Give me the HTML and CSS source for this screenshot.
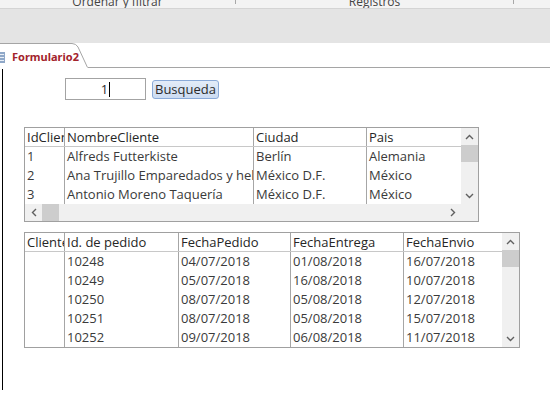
FILE: index.html
```html
<!DOCTYPE html>
<html lang="es">
<head>
    <meta charset="UTF-8">
    <title>Formulario2</title>
    <link rel="stylesheet" href="styles.css">
</head>
<body>
    <!-- Cinta superior (cortada) -->
    <div class="cinta">
        <div class="grupo grupo-ordenar"><span>Ordenar y filtrar</span></div>
        <div class="grupo grupo-registros"><span>Registros</span></div>
    </div>
    <div class="banda"></div>

    <!-- Pestañas de documento -->
    <div class="pestanas">
        <div class="pestana">
            <svg class="pestana-borde" width="90" height="25" viewBox="0 0 90 25">
                <path d="M0 0.5 H72 Q76 0.5 78 4 L87.5 24.5" fill="none" stroke="#a5a5a5" stroke-width="1"/>
            </svg>
            <span class="icono-form">
                <svg width="5" height="11" viewBox="0 0 5 11">
                    <rect x="0" y="0" width="5" height="11" fill="#8fa8c8"/>
                    <rect x="0" y="2" width="4" height="1" fill="#e8eef6"/>
                    <rect x="0" y="5" width="4" height="1" fill="#e8eef6"/>
                    <rect x="0" y="8" width="4" height="1" fill="#e8eef6"/>
                </svg>
            </span>
            <span class="pestana-texto">Formulario2</span>
        </div>
        <div class="pestanas-resto"></div>
    </div>

    <div class="area">
        <div class="regla"></div>
        <div class="formulario">
            <div class="busqueda">
                <div class="campo"><span>1</span><span class="cursor"></span></div>
                <button class="boton">Busqueda</button>
            </div>

            <!-- Subformulario de clientes -->
            <div class="hoja hoja-clientes">
                <div class="hoja-cuerpo">
                    <div class="filas">
                        <div class="fila cabecera">
                            <div class="celda">IdCliente</div>
                            <div class="celda">NombreCliente</div>
                            <div class="celda">Ciudad</div>
                            <div class="celda">Pais</div>
                        </div>
                        <div class="fila">
                            <div class="celda">1</div>
                            <div class="celda">Alfreds Futterkiste</div>
                            <div class="celda">Berlín</div>
                            <div class="celda">Alemania</div>
                        </div>
                        <div class="fila">
                            <div class="celda">2</div>
                            <div class="celda">Ana Trujillo Emparedados y helados</div>
                            <div class="celda">México D.F.</div>
                            <div class="celda">México</div>
                        </div>
                        <div class="fila">
                            <div class="celda">3</div>
                            <div class="celda">Antonio Moreno Taquería</div>
                            <div class="celda">México D.F.</div>
                            <div class="celda">México</div>
                        </div>
                    </div>
                    <div class="barra-v">
                        <span class="flecha"><svg width="9" height="6" viewBox="0 0 9 6"><path d="M1 5 L4.5 1.5 L8 5" fill="none" stroke="#606060" stroke-width="1.4"/></svg></span>
                        <span class="pulgar-v"></span>
                        <span class="flecha flecha-abajo"><svg width="9" height="6" viewBox="0 0 9 6"><path d="M1 1 L4.5 4.5 L8 1" fill="none" stroke="#606060" stroke-width="1.4"/></svg></span>
                    </div>
                </div>
                <div class="barra-h">
                    <span class="flecha-h"><svg width="6" height="9" viewBox="0 0 6 9"><path d="M5 1 L1.5 4.5 L5 8" fill="none" stroke="#606060" stroke-width="1.4"/></svg></span>
                    <span class="pulgar-h"></span>
                    <span class="flecha-h flecha-der"><svg width="6" height="9" viewBox="0 0 6 9"><path d="M1 1 L4.5 4.5 L1 8" fill="none" stroke="#606060" stroke-width="1.4"/></svg></span>
                    <span class="esquina"></span>
                </div>
            </div>

            <!-- Subformulario de pedidos -->
            <div class="hoja hoja-pedidos">
                <div class="hoja-cuerpo">
                    <div class="filas">
                        <div class="fila cabecera">
                            <div class="celda">Cliente</div>
                            <div class="celda">Id. de pedido</div>
                            <div class="celda">FechaPedido</div>
                            <div class="celda">FechaEntrega</div>
                            <div class="celda">FechaEnvio</div>
                        </div>
                        <div class="fila">
                            <div class="celda"></div>
                            <div class="celda">10248</div>
                            <div class="celda">04/07/2018</div>
                            <div class="celda">01/08/2018</div>
                            <div class="celda">16/07/2018</div>
                        </div>
                        <div class="fila">
                            <div class="celda"></div>
                            <div class="celda">10249</div>
                            <div class="celda">05/07/2018</div>
                            <div class="celda">16/08/2018</div>
                            <div class="celda">10/07/2018</div>
                        </div>
                        <div class="fila">
                            <div class="celda"></div>
                            <div class="celda">10250</div>
                            <div class="celda">08/07/2018</div>
                            <div class="celda">05/08/2018</div>
                            <div class="celda">12/07/2018</div>
                        </div>
                        <div class="fila">
                            <div class="celda"></div>
                            <div class="celda">10251</div>
                            <div class="celda">08/07/2018</div>
                            <div class="celda">05/08/2018</div>
                            <div class="celda">15/07/2018</div>
                        </div>
                        <div class="fila">
                            <div class="celda"></div>
                            <div class="celda">10252</div>
                            <div class="celda">09/07/2018</div>
                            <div class="celda">06/08/2018</div>
                            <div class="celda">11/07/2018</div>
                        </div>
                    </div>
                    <div class="barra-v">
                        <span class="flecha"><svg width="9" height="6" viewBox="0 0 9 6"><path d="M1 5 L4.5 1.5 L8 5" fill="none" stroke="#606060" stroke-width="1.4"/></svg></span>
                        <span class="pulgar-v"></span>
                        <span class="flecha flecha-abajo"><svg width="9" height="6" viewBox="0 0 9 6"><path d="M1 1 L4.5 4.5 L8 1" fill="none" stroke="#606060" stroke-width="1.4"/></svg></span>
                    </div>
                </div>
            </div>
        </div>
    </div>
</body>
</html>
```

FILE: styles.css
```css
body {
    margin: 0;
    width: 550px;
    height: 393px;
    overflow: hidden;
    background: #ffffff;
    font-family: "Open Sans", "Noto Sans", sans-serif;
    font-size: 13px;
    color: #3a3a3a;
}

/* Cinta */
.cinta {
    display: flex;
    height: 8px;
    background: #f3f3f3;
    border-bottom: 1px solid #d4d4d4;
    overflow: hidden;
}
.grupo {
    display: flex;
    justify-content: center;
    align-items: flex-end;
    border-right: 1px solid #a8a8a8;
    height: 4px;
    overflow: visible;
}
.grupo span {
    line-height: 12px;
    margin-bottom: -4px;
    font-size: 12px;
    color: #444;
}
.grupo-ordenar {
    width: 235px;
}
.grupo-registros {
    width: 277px;
}
.banda {
    height: 34px;
    background: #e4e4e4;
}

/* Pestañas */
.pestanas {
    display: flex;
    height: 25px;
}
.pestana {
    position: relative;
    width: 88px;
    display: flex;
    align-items: center;
    gap: 7px;
    padding-top: 2px;
    box-sizing: border-box;
}
.pestana-borde {
    position: absolute;
    left: 0;
    top: 0;
}
.icono-form {
    display: flex;
    margin-top: 1px;
}
.pestana-texto {
    font-family: "Noto Sans", sans-serif;
    font-weight: bold;
    font-size: 11px;
    color: #a3232c;
}
.pestanas-resto {
    flex: 1;
    border-bottom: 1px solid #a5a5a5;
}

/* Área del formulario */
.area {
    display: flex;
    height: 325px;
}
.regla {
    width: 1px;
    margin-left: 2px;
    margin-top: 1px;
    height: 321px;
    background: #000000;
}
.formulario {
    display: flex;
    flex-direction: column;
    padding-left: 21px;
}
.busqueda {
    display: flex;
    align-items: center;
    gap: 6px;
    margin-top: 10px;
    margin-left: 41px;
}
.campo {
    width: 79px;
    height: 20px;
    border: 1px solid #a3a3a3;
    display: flex;
    justify-content: center;
    align-items: center;
    color: #2a2a2a;
    font-size: 13px;
}
.cursor {
    width: 1px;
    height: 15px;
    background: #000;
    margin-left: 1px;
}
.boton {
    height: 19px;
    padding: 0 2px;
    border: 1px solid #8aaad8;
    border-radius: 3px;
    background: linear-gradient(#e3ecf8, #ccdcf2);
    font-family: "Open Sans", sans-serif;
    font-size: 13px;
    line-height: 16px;
    color: #2b2b2b;
}

/* Hojas de datos */
.hoja {
    border: 1px solid #a0a0a0;
    display: flex;
    flex-direction: column;
    background: #fff;
}
.hoja-clientes {
    width: 453px;
    margin-top: 27px;
}
.hoja-pedidos {
    width: 494px;
    margin-top: 10px;
}
.hoja-cuerpo {
    display: flex;
}
.filas {
    flex: 1;
    display: flex;
    flex-direction: column;
    overflow: hidden;
}
.fila {
    display: grid;
    height: 19px;
}
.hoja-clientes .fila {
    grid-template-columns: 39px 189px 113px 95px;
}
.hoja-pedidos .fila {
    grid-template-columns: 39px 114px 112px 113px 99px;
}
.celda {
    border-left: 1px solid #a6a6a6;
    padding-left: 2px;
    line-height: 19px;
    white-space: nowrap;
    overflow: hidden;
}
.celda:first-child {
    border-left: none;
    padding-left: 2px;
}
.cabecera {
    height: 18px;
    border-bottom: 1px solid #c8c8c8;
    color: #262626;
}
.cabecera .celda {
    line-height: 18px;
}

/* Barras de desplazamiento */
.barra-v {
    width: 17px;
    background: #f0f0f0;
    display: flex;
    flex-direction: column;
    align-items: center;
}
.flecha {
    height: 17px;
    display: flex;
    align-items: center;
    justify-content: center;
}
.flecha-abajo {
    margin-top: auto;
}
.pulgar-v {
    width: 17px;
    height: 17px;
    background: #cdcdcd;
}
.barra-h {
    display: flex;
    align-items: center;
    height: 17px;
    background: #f0f0f0;
}
.flecha-h {
    width: 17px;
    height: 17px;
    display: flex;
    align-items: center;
    justify-content: center;
}
.pulgar-h {
    width: 17px;
    height: 17px;
    background: #cdcdcd;
}
.flecha-der {
    margin-left: auto;
}
.esquina {
    width: 17px;
    height: 17px;
}
```
